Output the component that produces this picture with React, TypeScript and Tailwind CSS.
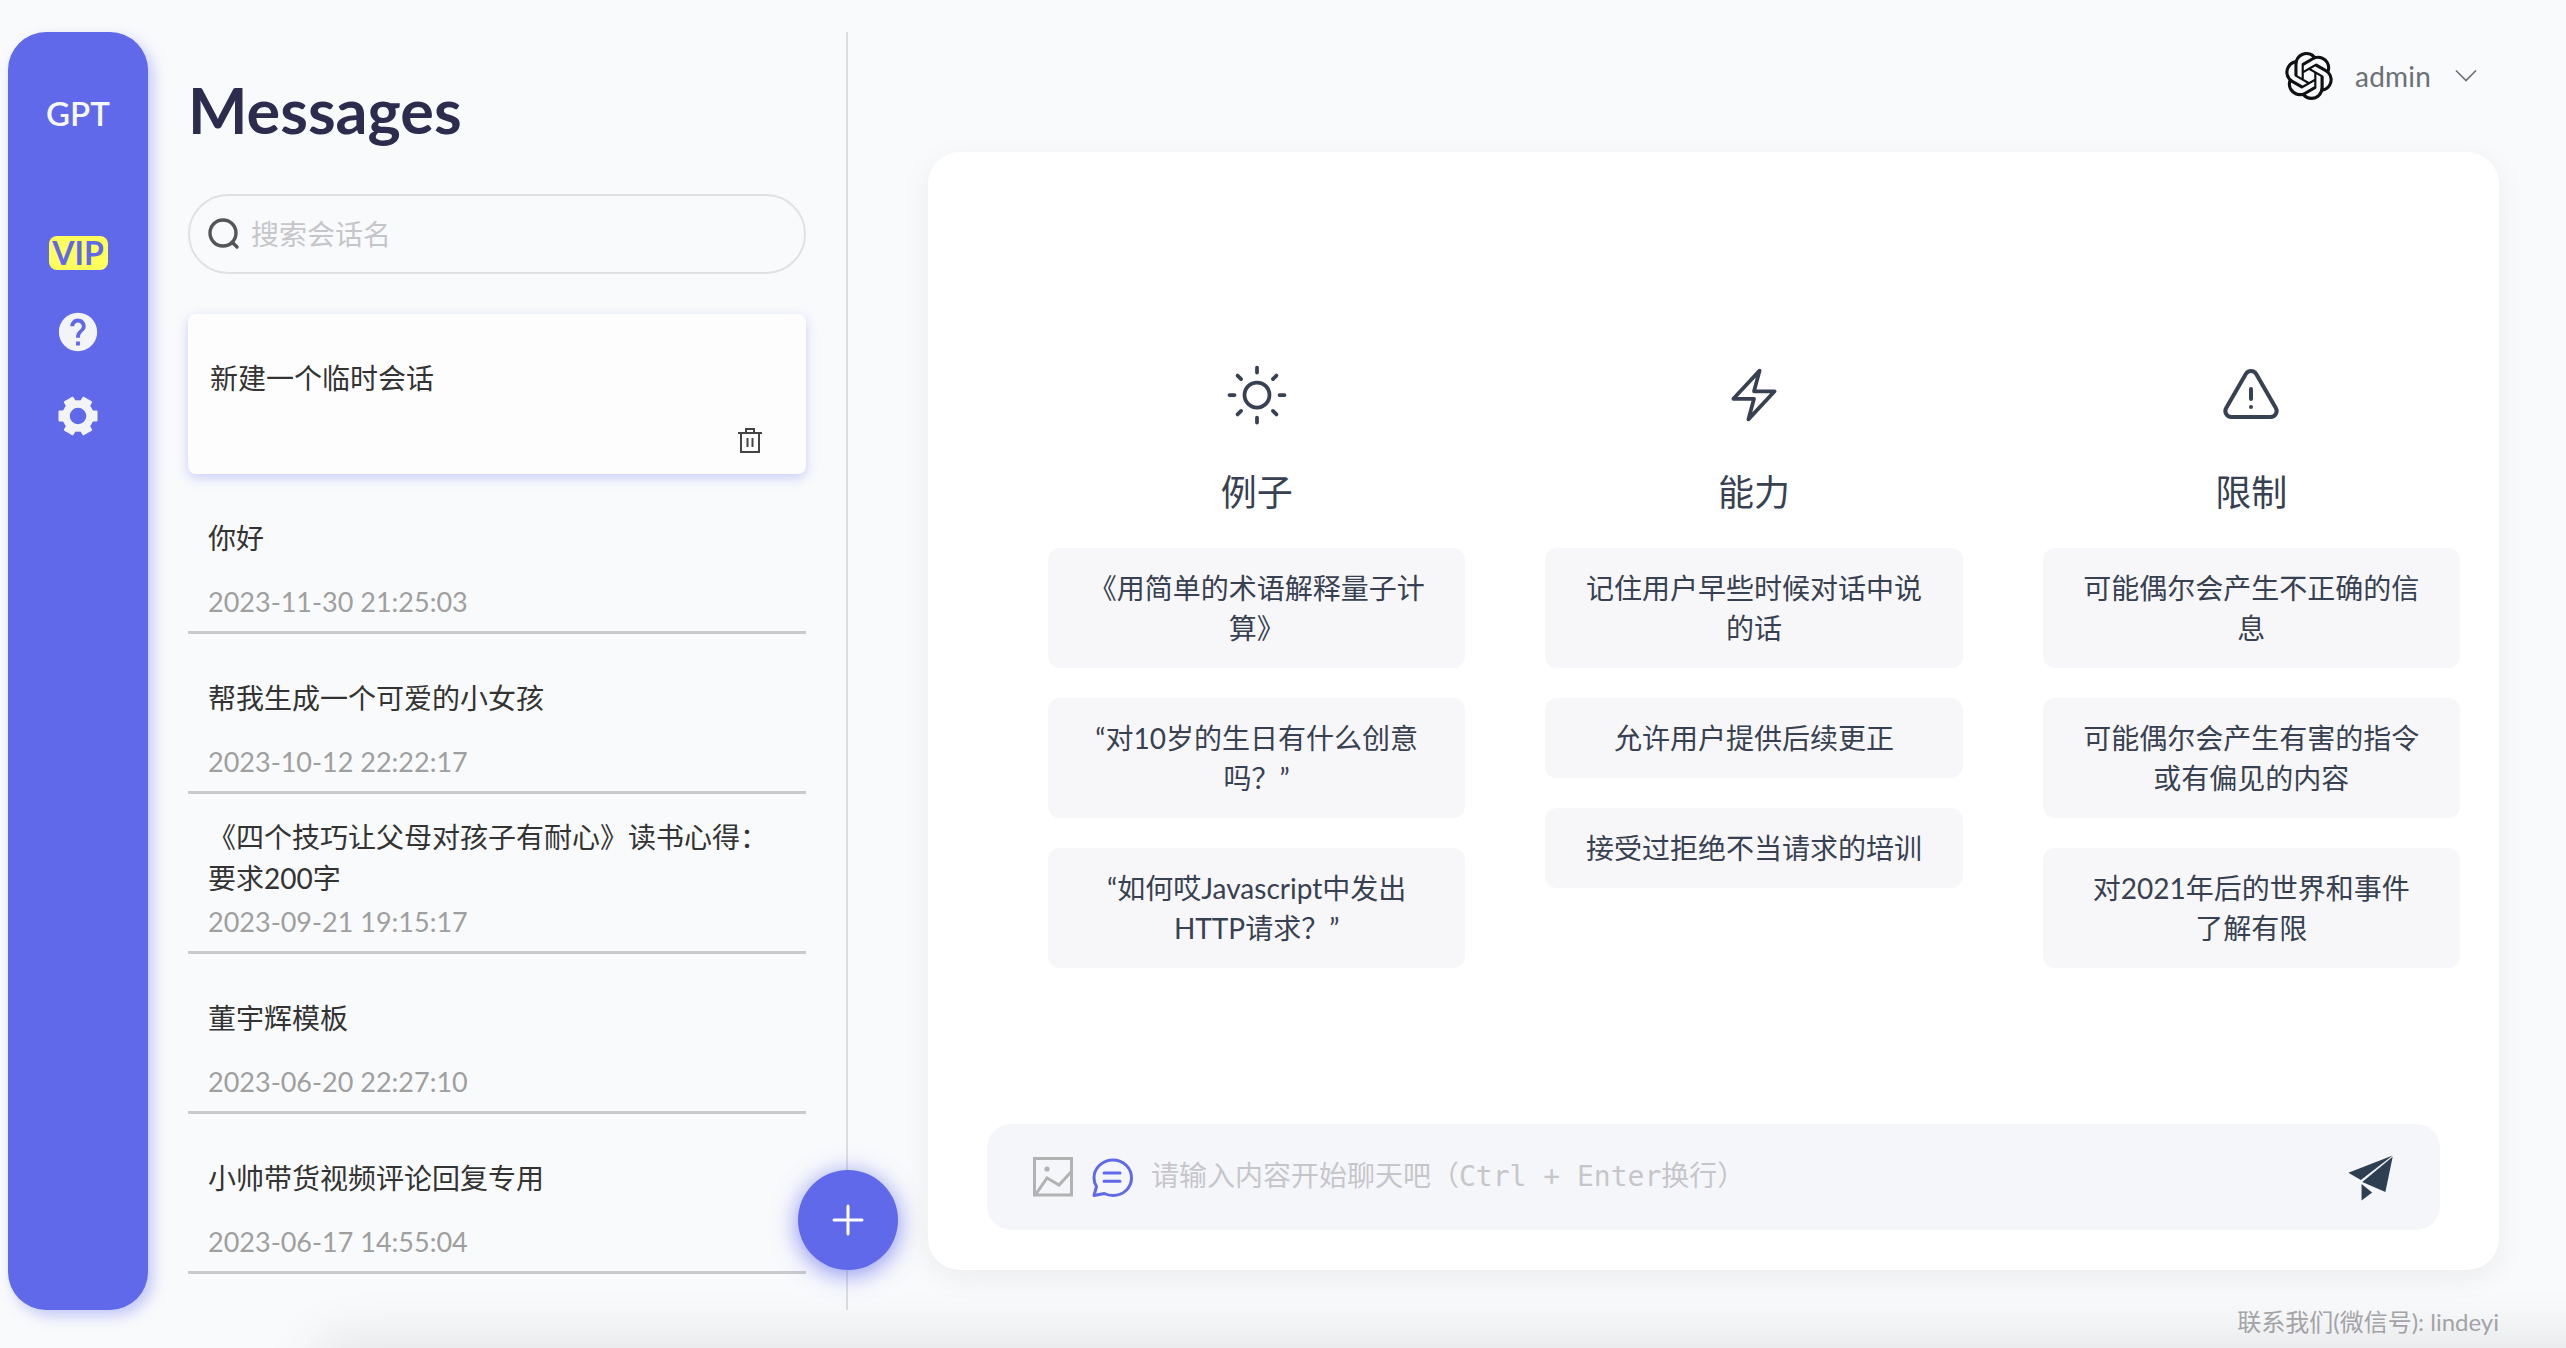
import React from 'react';
import { FiSun } from 'react-icons/fi';
import { HiOutlineBolt, HiOutlineExclamationTriangle } from 'react-icons/hi2';
import { MdHelp } from 'react-icons/md';
import { SiOpenai } from 'react-icons/si';

const sessions = [
  { title: '你好', time: '2023-11-30 21:25:03' },
  { title: '帮我生成一个可爱的小女孩', time: '2023-10-12 22:22:17' },
  { title: '《四个技巧让父母对孩子有耐心》读书心得：要求200字', time: '2023-09-21 19:15:17' },
  { title: '董宇辉模板', time: '2023-06-20 22:27:10' },
  { title: '小帅带货视频评论回复专用', time: '2023-06-17 14:55:04' },
];

const columns = [
  {
    title: '例子',
    icon: <FiSun size={60} strokeWidth={1.5} />,
    items: ['《用简单的术语解释量子计算》', '“对10岁的生日有什么创意吗？”', '“如何哎Javascript中发出HTTP请求？”'],
  },
  {
    title: '能力',
    icon: <HiOutlineBolt size={60} />,
    items: ['记住用户早些时候对话中说的话', '允许用户提供后续更正', '接受过拒绝不当请求的培训'],
  },
  {
    title: '限制',
    icon: <HiOutlineExclamationTriangle size={64} className="mt-[3px]" />,
    items: ['可能偶尔会产生不正确的信息', '可能偶尔会产生有害的指令或有偏见的内容', '对2021年后的世界和事件了解有限'],
  },
];

function GearIcon() {
  return (
    <svg width="40" height="40" viewBox="0 0 40 40" fill="#f3f4f8" className="mt-[41px]">
      <circle cx="20" cy="20" r="12" fill="none" stroke="#f3f4f8" strokeWidth="7.500" />
      {[0, 60, 120, 180, 240, 300].map((a) => (
        <rect key={a} x="31" y="14.500" width="8.500" height="11" rx="1" transform={`rotate(${a} 20 20)`} />
      ))}
    </svg>
  );
}

function Sidebar() {
  return (
    <aside className="w-[140px] h-[1278px] shrink-0 rounded-[38px] bg-[#5f69ea] shadow-[5px_6px_14px_rgba(95,105,234,0.35)] flex flex-col items-center pt-[61px]">
      <div className="text-[33px] leading-[40px] font-semibold text-[#f7f8fc]">GPT</div>
      <div className="mt-[103px] w-[59px] h-[34px] rounded-[8px] bg-[#ffff5c] text-[#5f69ea] text-[32px] leading-[34px] font-bold text-center">VIP</div>
      <MdHelp size={46} className="mt-[39px] text-[#f3f4f8]" />
      <GearIcon />
    </aside>
  );
}

function SessionPanel() {
  return (
    <section className="relative w-[660px] h-[1278px] shrink-0 ml-[40px] pr-[40px] border-r-2 border-[#dcdde1]">
      <h1 className="h-[162px] pt-[36px] text-[63px] leading-[84px] font-bold text-[#2d2b4e]">Messages</h1>
      <div className="h-[80px] rounded-full border-2 border-[#e0e1e4] flex items-center pl-[17px] gap-[10px]">
        <svg width="34" height="34" viewBox="0 0 34 34" fill="none" stroke="#555555" strokeWidth="3.400" strokeLinecap="round">
          <circle cx="16" cy="16" r="13" />
          <path d="M26 26l4 4" />
        </svg>
        <input
          placeholder="搜索会话名"
          className="flex-1 bg-transparent outline-none text-[28px] placeholder:text-[#c6c6ca]"
        />
      </div>
      <div className="mt-[40px] h-[160px] rounded-[8px] bg-[#fdfdfe] shadow-[0_4px_12px_rgba(95,105,234,0.3)] pl-[22px] pr-[20px] pt-[23px] relative text-[#333333]">
        <div className="h-[82px] flex items-center text-[28px] leading-[41px]">新建一个临时会话</div>
        <svg width="24" height="25" viewBox="0 0 24 25" fill="none" stroke="#444444" strokeWidth="2" className="absolute right-[44px] bottom-[21px]">
          <path d="M0 5h24M8 5V1h8v4M3 5v19h18V5M9.500 10v9M14.500 10v9" />
        </svg>
      </div>
      {sessions.map((s) => (
        <div key={s.time} className="h-[160px] border-b-[3px] border-[#c9cacd] px-[20px] pt-[23px]">
          <div className="h-[82px] flex items-center text-[28px] leading-[41px] text-[#333333]">{s.title}</div>
          <div className="text-[27px] leading-[40px] mt-[3px] text-[#9f9f9f]">{s.time}</div>
        </div>
      ))}
      <button className="absolute right-[-52px] top-[1138px] w-[100px] h-[100px] rounded-full bg-[#5f69ea] shadow-[0_4px_24px_rgba(95,105,234,0.75)] flex items-center justify-center">
        <svg width="32" height="32" viewBox="0 0 32 32" stroke="#ffffff" strokeWidth="3" strokeLinecap="round">
          <path d="M16 2v28M2 16h28" />
        </svg>
      </button>
    </section>
  );
}

function ChatBar() {
  return (
    <div className="mt-auto mb-[40px] mx-[59px] h-[106px] rounded-[24px] bg-[#f5f6fa] flex items-center pl-[46px] pr-[46px]">
      <svg width="40" height="40" viewBox="0 0 40 40" fill="none" stroke="#b2b2b2" strokeWidth="3">
        <rect x="1.500" y="1.500" width="37" height="36.500" />
        <circle cx="14" cy="12" r="2.600" fill="#b2b2b2" stroke="none" />
        <path d="M3 37L14 21l12 7 12-13" />
      </svg>
      <svg width="41" height="39" viewBox="0 0 41 39" fill="none" stroke="#5f69ea" strokeWidth="3" strokeLinecap="round" strokeLinejoin="round" className="ml-[19px]">
        <path d="M4.500 28.500C2.800 26 2 23 2 20 2 10 10.500 2 21 2s18.500 8 18.500 18S31 37.500 21 37.500c-3.200 0-6-.7-8.700-2L2 37.500z" />
        <path d="M12 15h16M12 23.300h16" />
      </svg>
      <input
        placeholder="请输入内容开始聊天吧（Ctrl + Enter换行）"
        className="flex-1 ml-[18px] bg-transparent outline-none text-[28px] font-['DejaVu_Sans_Mono','Noto_Sans_CJK_SC',monospace] placeholder:text-[#c6c6ca]"
      />
      <svg width="47" height="48" viewBox="80 44 142 144" fill="#2f3f52" className="mt-[2px]">
        <path d="M84 100L218 48 122 122z" />
        <path d="M126 128L218 52 196 158z" />
        <path d="M124 134l32 26-32 24z" />
      </svg>
    </div>
  );
}

function MainArea() {
  return (
    <main className="flex-1 ml-[80px] mr-[67px] flex flex-col">
      <header className="h-[120px] shrink-0 pb-[32px] flex items-center justify-end pr-[22px] text-[#6b6f76]">
        <SiOpenai size={48} className="text-[#111111]" />
        <span className="ml-[22px] text-[28px] leading-[40px] tracking-[0.2px]">admin</span>
        <svg width="22" height="14" viewBox="0 0 22 14" fill="none" stroke="#6b6f76" strokeWidth="1.600" className="ml-[24px]">
          <path d="M1 1.500l10 10 10-10" />
        </svg>
      </header>
      <div className="h-[1118px] shrink-0 rounded-[32px] bg-white shadow-[0_8px_30px_rgba(0,0,0,0.06)] flex flex-col">
        <div className="grid grid-cols-3 gap-x-[80px] pl-[120px] pr-[39px] pt-[213px] text-[#374151]">
          {columns.map((col) => (
            <div key={col.title} className="flex flex-col items-center">
              <div className="h-[60px] flex items-center justify-center">{col.icon}</div>
              <h2 className="mt-[40px] mb-[29px] text-[36px] leading-[54px] font-normal">{col.title}</h2>
              <div className="w-full flex flex-col gap-[30px]">
                {col.items.map((item) => (
                  <div key={item} className="rounded-[12px] bg-[#f7f7f9] px-[40px] py-[20px] text-[28px] leading-[40px] text-center">
                    {item}
                  </div>
                ))}
              </div>
            </div>
          ))}
        </div>
        <ChatBar />
      </div>
      <footer className="mt-[36px] text-right text-[24px] leading-[32px] text-[#a8a8aa]">联系我们(微信号): lindeyi</footer>
    </main>
  );
}

export default function App() {
  return (
    <div className="relative h-[1348px] overflow-hidden bg-[#f9fafc] flex pt-[32px] pl-[8px] font-['Lato','Noto_Sans_CJK_SC',sans-serif]">
      <Sidebar />
      <SessionPanel />
      <MainArea />
      {/* soft shade along the bottom edge */}
      <div className="absolute left-[320px] right-[-100px] top-[1348px] h-[40px] shadow-[0_0_60px_rgba(0,0,0,0.14)]" />
    </div>
  );
}
